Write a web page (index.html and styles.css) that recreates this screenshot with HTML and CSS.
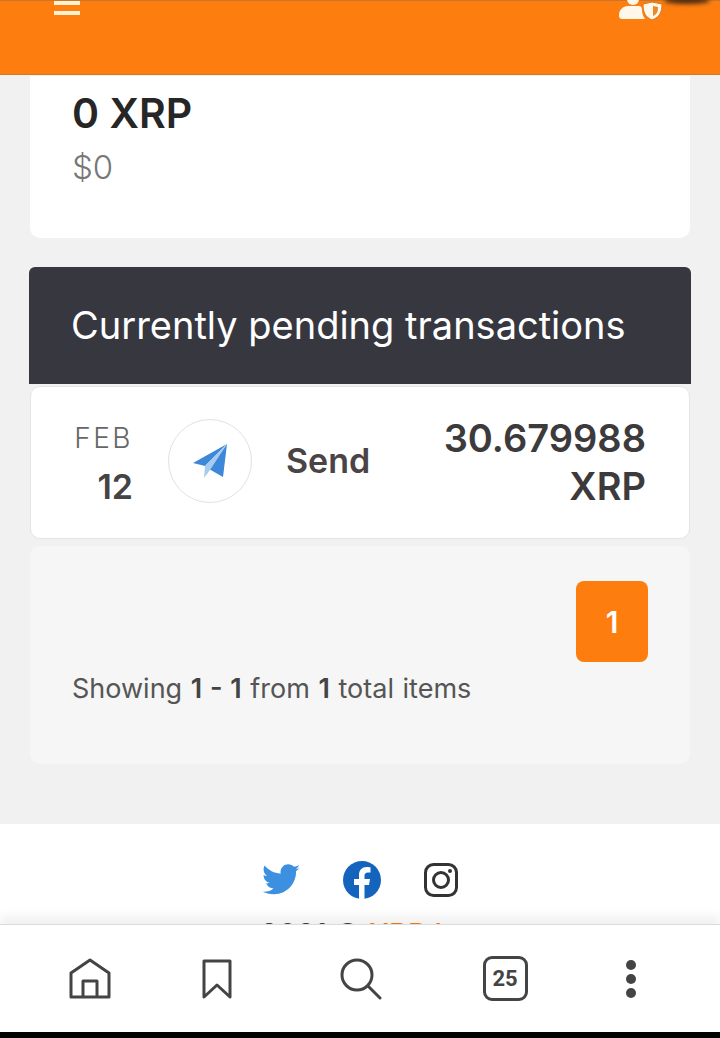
FILE: index.html
```html
<!DOCTYPE html>
<html lang="en">
    <head>
        <meta charset="UTF-8">
        <meta name="viewport" content="width=device-width, initial-scale=1.0">
        <title>Pending transactions</title>
        <link rel="stylesheet" href="styles.css">
    </head>

    <body>
        <div class="screen">
            <header class="top-bar">
                <svg class="menu-icon" width="26" height="16" viewBox="0 0 26 16">
                    <rect x="0" y="1" width="26" height="4" fill="#fff0cf"/>
                    <rect x="0" y="11" width="26" height="4" fill="#fff0cf"/>
                </svg>
                <svg class="user-icon" width="44" height="22" viewBox="0 0 44 22">
                    <circle cx="14" cy="-1" r="6" fill="#fff8ea"/>
                    <path d="M0 15c0-5 4-9 9-9h10c3 0 4 1 4 4 0 3 1 6 3 9H4c-3 0-4-1-4-4z" fill="#fff8ea"/>
                    <path d="M33 2l10 2c0 8-2 13-10 16-7-3-9-8-9-16z" fill="#fff8ea" stroke="#d9771e"/>
                    <path d="M34 6l5 1c0 5-1 7-5 9z" fill="#e9892a"/>
                </svg>
            </header>

            <main class="content">
                <section class="balance-card">
                    <div class="balance-amount">0 XRP</div>
                    <div class="balance-usd">$0</div>
                </section>

                <section class="pending">
                    <h2 class="pending-title">Currently pending transactions</h2>

                    <div class="tx-row">
                        <div class="tx-date">
                            <span class="tx-month">FEB</span>
                            <span class="tx-day">12</span>
                        </div>
                        <div class="tx-icon">
                            <svg width="36" height="36" viewBox="0 0 36 36">
                                <path d="M1 20L35 1 13 23z" fill="#3d88d9"/>
                                <path d="M35 1L31 34 17 26z" fill="#3d88d9"/>
                                <path d="M35 1L13 23l-1 12 6-8z" fill="#a6cdf0"/>
                            </svg>
                        </div>
                        <div class="tx-type">Send</div>
                        <div class="tx-amount">30.679988<br>XRP</div>
                    </div>

                    <div class="pager-box">
                        <div class="pager">
                            <a class="page-num">1</a>
                        </div>
                        <p class="showing">Showing <b>1 - 1</b> from <b>1</b> total items</p>
                    </div>
                </section>
            </main>

            <footer class="site-footer">
                <div class="socials">
                    <svg width="38" height="32" viewBox="0 0 24 20">
                        <path d="M24 2.400c-.9.400-1.800.7-2.800.8 1-.6 1.800-1.600 2.200-2.700-1 .6-2 1-3.100 1.200C19.300.7 18 0 16.600 0c-2.700 0-4.900 2.200-4.900 4.900 0 .4 0 .8.100 1.100C7.700 5.800 4.100 3.900 1.700.9c-.4.700-.7 1.600-.7 2.500 0 1.700.9 3.200 2.200 4.100-.8 0-1.600-.2-2.200-.6v.1c0 2.400 1.700 4.400 3.900 4.800-.4.100-.8.200-1.300.2-.3 0-.6 0-.9-.1.600 2 2.400 3.400 4.600 3.400-1.700 1.300-3.800 2.100-6.100 2.100-.4 0-.8 0-1.200-.1C2.200 18.200 4.800 19 7.500 19c9.100 0 14-7.500 14-14v-.6c1-.7 1.800-1.600 2.500-2z" fill="#3d8fe0"/>
                    </svg>
                    <svg width="38" height="38" viewBox="0 0 38 38">
                        <circle cx="19" cy="19" r="19" fill="#1464bd"/>
                        <path d="M16 38V24h-5v-6h5v-4c0-5 3-8 7.500-8 2 0 4 .4 4 .4v5h-2.500c-2.500 0-3.500 1.500-3.500 3.100V18h5.500l-1 6H21.500v14z" fill="#fff"/>
                    </svg>
                    <svg width="34" height="34" viewBox="0 0 34 34" fill="none" stroke="#333">
                        <rect x="1.500" y="1.500" width="31" height="31" rx="8" stroke-width="3"/>
                        <circle cx="17" cy="17" r="7.500" stroke-width="3"/>
                        <circle cx="26" cy="8" r="2" fill="#333" stroke="none"/>
                    </svg>
                </div>
                <div class="copyright">2021 &copy; <span>XRP L</span></div>
            </footer>

            <nav class="browser-bar">
                <svg width="42" height="42" viewBox="0 0 42 42" fill="none" stroke="#444" stroke-width="3" stroke-linejoin="round">
                    <path d="M2 15L21 2l19 13v24H2z"/>
                    <path d="M14 39V23h14v16"/>
                </svg>
                <svg width="30" height="42" viewBox="0 0 30 42" fill="none" stroke="#444" stroke-width="3" stroke-linejoin="round">
                    <path d="M2 3h26v36L15 27 2 39z"/>
                </svg>
                <svg width="42" height="42" viewBox="0 0 42 42" fill="none" stroke="#444" stroke-width="3" stroke-linecap="round">
                    <circle cx="17" cy="17" r="15"/>
                    <path d="M28 28l12 12"/>
                </svg>
                <div class="tab-count">25</div>
                <div class="more-dots">
                    <i></i>
                    <i></i>
                    <i></i>
                </div>
            </nav>

            <div class="system-strip"></div>
        </div>
    </body>
</html>
```

FILE: styles.css
```css
body {
    margin: 0;
    font-family: Inter, "Noto Sans", sans-serif;
    background-color: #f1f1f1;
    color: #333;
}

.screen {
    display: flex;
    flex-direction: column;
    height: 1038px;
    overflow: hidden;
}

.top-bar {
    position: relative;
    flex: 0 0 75px;
    box-sizing: border-box;
    display: flex;
    justify-content: space-between;
    align-items: flex-start;
    padding: 0 57px 0 54px;
    background-color: #fd7d0f;
    border-top: 1px solid #c9752b;
    border-bottom: 1px solid #d8771f;
    margin-bottom: 1px;
}

/* dark smudge in the top right corner of the photo */
.top-bar::after {
    content: "";
    position: absolute;
    top: -4px;
    right: 10px;
    width: 46px;
    height: 7px;
    background-color: #4a2a12;
    border-radius: 50%;
    filter: blur(2px);
}

.menu-icon {
    margin-top: -1px;
}

.user-icon {
    margin-top: -1px;
}

.content {
    flex: 0 0 748px;
    box-sizing: border-box;
    padding: 0 30px;
}

.balance-card {
    box-sizing: border-box;
    height: 162px;
    padding: 15px 42px 0;
    background-color: #fff;
    border-radius: 0 0 10px 10px;
}

.balance-amount {
    font-size: 41px;
    line-height: 44px;
    font-weight: 600;
    color: #262626;
}

.balance-usd {
    margin-top: 12px;
    font-size: 33px;
    line-height: 40px;
    font-weight: 300;
    color: #777;
}

.pending {
    margin-top: 29px;
}

.pending-title {
    margin: 0 -1px;
    height: 117px;
    box-sizing: border-box;
    padding-left: 42px;
    font-size: 38px;
    line-height: 117px;
    font-weight: 400;
    color: #fff;
    background-color: #37373f;
    border-radius: 6px 6px 0 0;
}

.tx-row {
    box-sizing: border-box;
    display: flex;
    align-items: center;
    height: 153px;
    margin-top: 2px;
    padding: 0 43px 4px 44px;
    background-color: #fff;
    border: 1px solid #e4e4e4;
    border-radius: 10px;
}

.tx-date {
    width: 58px;
    margin-top: 7px;
    display: flex;
    flex-direction: column;
    align-items: flex-end;
    gap: 12px;
}

.tx-month {
    font-size: 28px;
    line-height: 34px;
    font-weight: 300;
    letter-spacing: 2.500px;
    color: #666;
}

.tx-day {
    font-size: 34px;
    line-height: 40px;
    font-weight: 600;
    color: #444;
}

.tx-icon {
    box-sizing: border-box;
    width: 84px;
    height: 84px;
    margin-left: 35px;
    display: flex;
    justify-content: center;
    align-items: center;
    border: 1px solid #e2e2e2;
    border-radius: 50%;
}

.tx-type {
    margin-left: 34px;
    font-size: 34px;
    font-weight: 600;
    color: #4a4446;
}

.tx-amount {
    margin-left: auto;
    margin-top: 2px;
    font-size: 38px;
    line-height: 48px;
    font-weight: 600;
    text-align: right;
    color: #3d3a3c;
}

.pager-box {
    box-sizing: border-box;
    height: 218px;
    margin-top: 7px;
    padding: 35px 42px 0 42px;
    background-color: #f6f6f6;
    border-radius: 10px;
}

.pager {
    display: flex;
    justify-content: flex-end;
}

.page-num {
    width: 72px;
    height: 81px;
    display: flex;
    justify-content: center;
    align-items: center;
    font-size: 30px;
    font-weight: 600;
    color: #fff;
    background-color: #fd7d0f;
    border-radius: 8px;
}

.showing {
    margin: 9px 0 0;
    font-size: 27px;
    line-height: 36px;
    font-weight: 400;
    word-spacing: 1px;
    color: #555;
}

.showing b {
    font-weight: 600;
    color: #444;
}

.site-footer {
    flex: 0 0 100px;
    overflow: hidden;
    background-color: #fff;
    text-align: center;
}

.socials {
    display: flex;
    justify-content: center;
    align-items: center;
    gap: 43px;
    padding-top: 37px;
    height: 38px;
}

.copyright {
    margin-top: 19px;
    padding-right: 9px;
    font-size: 29px;
    line-height: 32px;
    font-weight: 500;
    color: #444;
}

.copyright span {
    color: #fd7d0f;
}

.browser-bar {
    flex: 0 0 108px;
    box-sizing: border-box;
    display: grid;
    grid-template-columns: 126px 128px 160px 128px 124px;
    justify-items: center;
    align-items: center;
    padding: 0 27px;
    background-color: #fff;
    border-top: 1px solid #dcdcdc;
    box-shadow: 0 -8px 10px rgba(0, 0, 0, 0.06);
}

.tab-count {
    box-sizing: border-box;
    width: 45px;
    height: 45px;
    display: flex;
    justify-content: center;
    align-items: center;
    font-family: Roboto, sans-serif;
    font-size: 22px;
    font-weight: 700;
    color: #444;
    border: 3px solid #444;
    border-radius: 9px;
}

.more-dots {
    display: flex;
    flex-direction: column;
    gap: 4px;
}

.more-dots i {
    display: block;
    width: 10px;
    height: 10px;
    background-color: #444;
    border-radius: 50%;
}

.system-strip {
    flex: 0 0 6px;
    background-color: #000;
}
```
